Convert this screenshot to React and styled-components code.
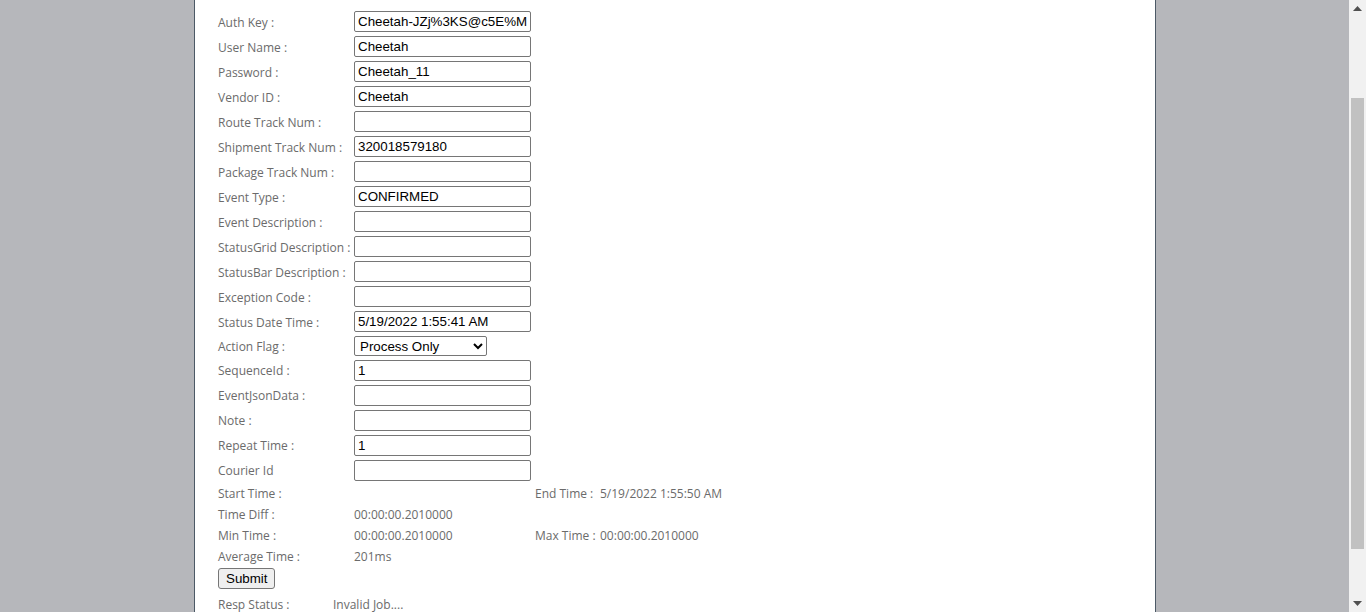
import React from 'react';
import styled, { createGlobalStyle } from 'styled-components';

const GlobalStyle = createGlobalStyle`
  html, body {
    margin: 0;
    padding: 0;
    height: 100%;
    overflow: hidden;
  }
  #root { height: 100%; }
`;

const Screen = styled.div`
  display: flex;
  height: 612px;
  background: #b6b7bb;
`;

const Main = styled.div`
  flex: 1;
  display: flex;
  padding-left: 194px;
  overflow: hidden;
`;

const Panel = styled.div`
  width: 962px;
  background: #fff;
  border-left: 1px solid #4c5966;
  border-right: 1px solid #4c5966;
  padding: 9px 0 0 23px;
  box-sizing: border-box;
  font-family: 'Open Sans', sans-serif;
  font-size: 12px;
  color: #6b6b6b;
`;

const FormGrid = styled.div`
  display: grid;
  grid-template-columns: 136px auto;
  align-items: center;
`;

const Label = styled.div`
  display: flex;
  align-items: center;
  box-sizing: border-box;
  height: ${p => p.$h || 25}px;
  padding-top: ${p => (p.$nudge ? 2 : 0)}px;
  white-space: nowrap;
`;

const Cell = styled.div`
  display: flex;
  align-items: center;
  height: ${p => p.$h || 25}px;
`;

const TextInput = styled.input`
  box-sizing: border-box;
  width: 177px;
  height: 21px;
  border: 1px solid #767676;
  border-radius: 2px;
  padding: 1px 3px;
  font-family: 'Liberation Sans', Arial, sans-serif;
  font-size: 13.33px;
  color: #000;
  background: #fff;
  outline: none;
`;

const Select = styled.select`
  box-sizing: border-box;
  width: 133px;
  height: 20px;
  border: 1px solid #767676;
  border-radius: 2px;
  padding: 0 1px;
  font-family: 'Liberation Sans', Arial, sans-serif;
  font-size: 13.33px;
  color: #000;
  background: #fff;
`;

const StatsGrid = styled.div`
  display: grid;
  grid-template-columns: 136px 181px 65px auto;
  grid-auto-rows: 21px;
  align-items: center;
  white-space: nowrap;
`;

const Button = styled.button`
  margin-top: 1px;
  height: 21px;
  padding: 0 7px;
  border: 1px solid #767676;
  border-radius: 3px;
  background: #efefef;
  font-family: 'Liberation Sans', Arial, sans-serif;
  font-size: 13.33px;
  color: #000;
`;

const RespRow = styled.div`
  display: grid;
  grid-template-columns: 115px auto;
  align-items: center;
  height: 21px;
  margin-top: 5px;
`;

const Scrollbar = styled.div`
  width: 17px;
  background: #f1f1f1;
  display: flex;
  flex-direction: column;
  align-items: center;
`;

const Arrow = styled.div`
  height: 17px;
  width: 17px;
  display: flex;
  align-items: center;
  justify-content: center;
`;

const Track = styled.div`
  flex: 1;
  width: 100%;
  display: flex;
  justify-content: center;
  padding-top: 81px;
  padding-bottom: 46px;
  box-sizing: border-box;
`;

const Thumb = styled.div`
  width: 13px;
  height: 100%;
  background: #c1c1c1;
`;

const fields = [
  ['Auth Key :', 'Cheetah-JZj%3KS@c5E%M'],
  ['User Name :', 'Cheetah'],
  ['Password :', 'Cheetah_11'],
  ['Vendor ID :', 'Cheetah'],
  ['Route Track Num :', ''],
  ['Shipment Track Num :', '320018579180'],
  ['Package Track Num :', ''],
  ['Event Type :', 'CONFIRMED'],
  ['Event Description :', ''],
  ['StatusGrid Description :', ''],
  ['StatusBar Description :', ''],
  ['Exception Code :', ''],
  ['Status Date Time :', '5/19/2022 1:55:41 AM'],
];

const fields2 = [
  ['SequenceId :', '1'],
  ['EventJsonData :', ''],
  ['Note :', ''],
  ['Repeat Time :', '1'],
  ['Courier Id', ''],
];

const App = () => {
  return (
    <Screen>
      <GlobalStyle />
      <Main>
        <Panel>
          <FormGrid>
            {fields.map(([label, value]) => (
              <React.Fragment key={label}>
                <Label $nudge>{label}</Label>
                <Cell>
                  <TextInput defaultValue={value} />
                </Cell>
              </React.Fragment>
            ))}
            <Label $h={24}>Action Flag :</Label>
            <Cell $h={24}>
              <Select defaultValue="p">
                <option value="p">Process Only</option>
              </Select>
            </Cell>
            {fields2.map(([label, value]) => (
              <React.Fragment key={label}>
                <Label>{label}</Label>
                <Cell>
                  <TextInput defaultValue={value} />
                </Cell>
              </React.Fragment>
            ))}
          </FormGrid>
          <StatsGrid>
            <span>Start Time :</span>
            <span></span>
            <span>End Time :</span>
            <span>5/19/2022 1:55:50 AM</span>
            <span>Time Diff :</span>
            <span>00:00:00.2010000</span>
            <span></span>
            <span></span>
            <span>Min Time :</span>
            <span>00:00:00.2010000</span>
            <span>Max Time :</span>
            <span>00:00:00.2010000</span>
            <span>Average Time :</span>
            <span>201ms</span>
          </StatsGrid>
          <Button>Submit</Button>
          <RespRow>
            <span>Resp Status :</span>
            <span>Invalid Job....</span>
          </RespRow>
        </Panel>
      </Main>
      <Scrollbar>
        <Arrow>
          <svg width="9" height="5" viewBox="0 0 9 5">
            <polygon points="0,5 4.5,0 9,5" fill="#505050" />
          </svg>
        </Arrow>
        <Track>
          <Thumb />
        </Track>
        <Arrow>
          <svg width="9" height="5" viewBox="0 0 9 5">
            <polygon points="0,0 4.5,5 9,0" fill="#505050" />
          </svg>
        </Arrow>
      </Scrollbar>
    </Screen>
  );
};

export default App;
